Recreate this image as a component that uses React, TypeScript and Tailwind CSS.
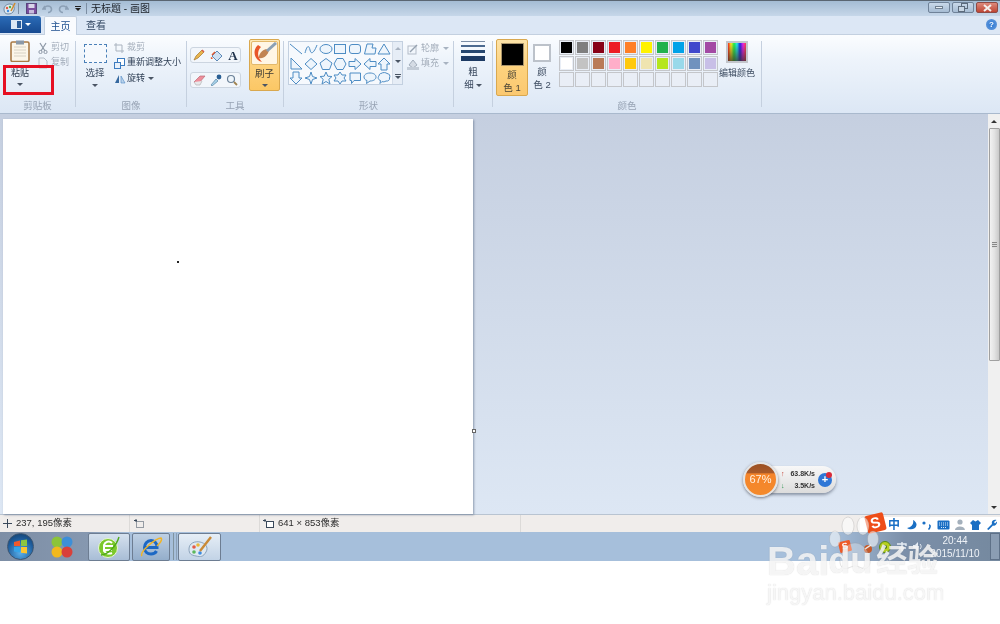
import React from "react";

const Caret = ({ className = "" }: { className?: string }) => (
  <span className={`inline-block w-0 h-0 border-x-[3px] border-t-[3px] border-x-transparent border-t-[#4a5564] ${className}`} />
);

const Div = () => <div className="w-px my-[6px] bg-[#c5d0df] shrink-0" />;

function Group({ w, label, children }: { w: string; label: string; children: React.ReactNode }) {
  return (
    <div className={`${w} shrink-0 flex flex-col`}>
      <div className="h-[65px] flex items-start">{children}</div>
      <div className="h-[12px] leading-[12px] text-center text-[9.5px] text-[#97a3b4]">{label}</div>
    </div>
  );
}

const I = ({ w = 12, h = 12, vb, children, className = "" }: { w?: number; h?: number; vb?: string; children: React.ReactNode; className?: string }) => (
  <svg width={w} height={h} viewBox={vb || `0 0 ${w} ${h}`} className={`shrink-0 ${className}`}>{children}</svg>
);

const shapes: React.ReactNode[] = [
  <path d="M1 2L13 12" />,
  <path d="M1 11C3 3 5 3 6 8S10 11 13 3" />,
  <ellipse cx="7" cy="7" rx="6" ry="4.5" />,
  <rect x="1.5" y="2.5" width="11" height="9" />,
  <rect x="1.5" y="2.5" width="11" height="9" rx="2.5" />,
  <path d="M1.5 12L4 2H10L9 6H13L12 12Z" />,
  <path d="M7 2L13 12H1Z" />,
  <path d="M2 1V12H13Z" />,
  <path d="M7 1.5L13 7L7 12.5L1 7Z" />,
  <path d="M7 1.5L13 6L10.5 12.5H3.5L1 6Z" />,
  <path d="M4 1.5H10L13 7L10 12.5H4L1 7Z" />,
  <path d="M1 4.5H7V1.5L13 7L7 12.5V9.5H1Z" />,
  <path d="M13 4.5H7V1.5L1 7L7 12.5V9.5H13Z" />,
  <path d="M7 1L13 7H10V13H4V7H1Z" />,
  <path d="M4 1H10V7H13L7 13L1 7H4Z" />,
  <path d="M7 1L8.5 5.5L13 7L8.5 8.5L7 13L5.5 8.5L1 7L5.5 5.5Z" />,
  <path d="M7 1L8.8 5.2L13 5.5L9.8 8.3L11 13L7 10.5L3 13L4.2 8.3L1 5.5L5.2 5.2Z" />,
  <path d="M7 1L9 4H13L11 7L13 10H9L7 13L5 10H1L3 7L1 4H5Z" />,
  <path d="M2 2H12.5V9.5H6L3.5 12.5V9.5H2Z" />,
  <path d="M7 2C11 2 13 4 13 6S11 10 7 10L3.5 12.5L4 9.5C2 9 1 7.5 1 6C1 4 3 2 7 2Z" />,
  <path d="M4 2.5C6 1 9 1.5 10 2.5C12.5 2.5 13.5 5 12.5 7C13 9 11 10.5 9 10C7.5 11 6 11 5 10.5L3 12.5L3.5 9.5C1 9 0.5 6 2 5C2 3.5 3 2.5 4 2.5Z" />,
];

const row1 = ["#000000", "#7f7f7f", "#880015", "#ed1c24", "#ff7f27", "#fff200", "#22b14c", "#00a2e8", "#3f48cc", "#a349a4"];
const row2 = ["#ffffff", "#c3c3c3", "#b97a57", "#ffaec9", "#ffc90e", "#efe4b0", "#b5e61d", "#99d9ea", "#7092be", "#c8bfe7"];

const Swatch = ({ c }: { c?: string }) => (
  <div className="w-[15px] h-[15px] border border-[#c4c6ca] p-px bg-[#e9eef6]">
    {c ? <div className="w-full h-full" style={{ backgroundColor: c }} /> : null}
  </div>
);

const WinBtn = ({ w = "w-[22px]", cls, children }: { w?: string; cls: string; children: React.ReactNode }) => (
  <div className={`${w} h-[11px] rounded-[2px] border border-[#6f8298] flex items-center justify-center ${cls}`}>{children}</div>
);

const TaskBtn = ({ w, cls, children }: { w: string; cls: string; children: React.ReactNode }) => (
  <div className={`${w} h-[28px] mt-px rounded-[2px] border border-[#6d7d92] flex items-center justify-center shrink-0 ${cls}`}>{children}</div>
);

export default function App() {
  return (
    <div className="relative w-[1000px] h-[624px] overflow-hidden bg-white flex flex-col blur-[0.35px] font-['Liberation_Sans','Noto_Sans_CJK_SC',sans-serif] text-[9px] text-[#3c4b60]">
      {/* title bar */}
      <div className="h-[16px] shrink-0 border-t border-[#5a6672] bg-[linear-gradient(180deg,#a4bcd4,#c6d7e9)] flex items-center pl-[3px] pr-[2px]">
        <I w={13} h={13} className="">
          <path d="M1 7C1 4 4 2 7 2S12 5 11 8 8 12 5 12 1 10 1 7Z" fill="#dfe8ef" stroke="#6f8aa5" />
          <circle cx="4" cy="6" r="1.2" fill="#e25b3f" />
          <circle cx="7" cy="5" r="1.2" fill="#4cae4c" />
          <circle cx="5" cy="9" r="1.2" fill="#3d8be0" />
          <path d="M8 9L12 1" stroke="#d08a2e" strokeWidth="1.5" />
        </I>
        <div className="w-px h-[11px] bg-[#7c8ea3] ml-[2px] mr-[7px]" />
        <I w={11} h={11}>
          <rect x="0.5" y="0.5" width="10" height="10" fill="#7a4d9e" stroke="#58457c" />
          <rect x="2.5" y="1" width="6" height="4" fill="#d9d5ea" />
          <rect x="3" y="7" width="5" height="3.5" fill="#c6bddd" />
        </I>
        <I w={11} h={11} className="ml-[5px]"><path d="M3 3L1 6H4M2 6C3 2 9 2 9.5 6C9.7 8 8 9.5 6 9.5" fill="none" stroke="#8ca0b6" strokeWidth="1.6" /></I>
        <I w={11} h={11} className="ml-[5px]"><path d="M8 3L10 6H7M9 6C8 2 2 2 1.5 6C1.3 8 3 9.5 5 9.5" fill="none" stroke="#8ca0b6" strokeWidth="1.6" /></I>
        <div className="ml-[6px] flex flex-col items-center gap-px">
          <div className="w-[6px] h-px bg-[#222]" />
          <Caret className="border-t-[#222]" />
        </div>
        <div className="w-px h-[11px] bg-[#7c8ea3] ml-[5px] mr-[3px]" />
        <span className="text-[10px] leading-none text-[#20262e] ml-px">无标题 - 画图</span>
        <div className="flex-1" />
        <div className="flex gap-[2px] mt-[-2px]">
          <WinBtn cls="bg-[linear-gradient(180deg,#c9d9ea,#a6bcd3)]"><div className="w-[8px] h-[3px] bg-[#e9eff5] border border-[#6f7f90]" /></WinBtn>
          <WinBtn cls="bg-[linear-gradient(180deg,#c9d9ea,#a6bcd3)]">
            <I w={10} h={9}><rect x="3.5" y="0.5" width="6" height="5" fill="none" stroke="#5c6b7c" /><rect x="0.5" y="3.5" width="6" height="5" fill="#c8d6e4" stroke="#5c6b7c" /></I>
          </WinBtn>
          <WinBtn cls="bg-[linear-gradient(180deg,#dd8a7c,#bf4534)] border-[#8e4a45]">
            <I w={9} h={8}><path d="M1 1L8 7M8 1L1 7" stroke="#f4f0ee" strokeWidth="2" /></I>
          </WinBtn>
        </div>
      </div>

      {/* tabs */}
      <div className="h-[19px] shrink-0 bg-[#dce7f5] flex items-end border-b border-[#c3d0e0] pr-[2px]">
        <div className="w-[41px] h-[17px] mb-px rounded-tr-[3px] bg-[linear-gradient(180deg,#2b6cb8,#174a90)] flex items-center justify-center gap-[3px]">
          <I w={11} h={9}><rect x="0" y="0" width="11" height="9" fill="#dce8f5" /><rect x="6" y="1" width="4" height="7" fill="#2b5c99" /></I>
          <Caret className="border-t-white" />
        </div>
        <div className="ml-[3px] w-[33px] h-[19px] -mb-px bg-[#f9fbfe] border border-b-0 border-[#c3d0e0] rounded-t-[2px] flex items-center justify-center text-[10px] text-[#1d4f8f]">主页</div>
        <div className="w-[42px] h-[18px] flex items-center justify-center text-[10px] text-[#2f4560] ml-[-4px] pl-[4px]">查看</div>
        <div className="flex-1" />
        <div className="w-[11px] h-[11px] mb-[4px] mr-px rounded-full bg-[radial-gradient(circle,#2a78d4,#6d9ddb)] flex items-center justify-center text-[8px] font-bold text-white leading-none">?</div>
      </div>

      {/* ribbon */}
      <div className="h-[79px] shrink-0 flex bg-[linear-gradient(180deg,#fbfdff,#eef4fb_30%,#dce7f5)] border-b border-[#a9b9cd]">
        <Group w="w-[75px]" label="剪贴板">
          <div className="flex pl-[10px] pt-[5px]">
            <div className="w-[20px] flex flex-col items-center">
              <I w={20} h={22}>
                <rect x="1" y="2" width="18" height="19.5" rx="1.5" fill="#fbf6e9" stroke="#a97b45" strokeWidth="1.6" />
                <rect x="6" y="0.5" width="8" height="4" fill="#8a99a8" />
                <path d="M4 7H16M4 10H16M4 13H16M4 16H16" stroke="#d7d2c4" />
              </I>
              <span className="leading-[12px] mt-[5px] text-[#2f3c4e]">粘贴</span>
              <Caret className="mt-[4px]" />
            </div>
            <div className="ml-[8px] flex flex-col text-[#a3adba]">
              <div className="h-[15px] flex items-center gap-[3px]">
                <I w={10} h={12}><path d="M2 1L7 9M8 1L3 9" stroke="#8d98a6" strokeWidth="1.2" /><circle cx="2.5" cy="10" r="1.6" fill="none" stroke="#8d98a6" /><circle cx="7.5" cy="10" r="1.6" fill="none" stroke="#8d98a6" /></I>
                <span>剪切</span>
              </div>
              <div className="h-[15px] flex items-center gap-[3px]">
                <I w={10} h={12}><path d="M1 1H6L9 4V11H1Z" fill="#eef2f7" stroke="#b4bdc8" /></I>
                <span>复制</span>
              </div>
            </div>
          </div>
        </Group>
        <Div />
        <Group w="w-[110px]" label="图像">
          <div className="flex pl-[7px] pt-[9px]">
            <div className="w-[24px] flex flex-col items-center">
              <div className="w-[23px] h-[19px] border border-dashed border-[#4a80b8] bg-[#f6f9fd]" />
              <span className="leading-[12px] mt-[4px] text-[9.5px]">选择</span>
              <Caret className="mt-[5px]" />
            </div>
            <div className="ml-[7px] -mt-[4px] flex flex-col">
              <div className="h-[15px] flex items-center gap-[3px] text-[#a3adba]">
                <I w={10} h={10}><path d="M2 0V8H10M0 2H8V10" fill="none" stroke="#a9b3bf" /></I>
                <span>裁剪</span>
              </div>
              <div className="h-[16px] flex items-center gap-[2px] text-[#2f3f55]">
                <I w={11} h={11}><rect x="3.5" y="0.5" width="7" height="7" fill="#fff" stroke="#3d7cc0" /><rect x="0.5" y="4.5" width="6" height="6" fill="#e9f1fa" stroke="#3d7cc0" /></I>
                <span>重新调整大小</span>
              </div>
              <div className="h-[15px] flex items-center gap-[1px] text-[#2f3f55]">
                <I w={12} h={10}><path d="M1 9L5 1V9Z" fill="#35689f" /><path d="M7 9V2L11 9Z" fill="#b9d3ec" stroke="#4d87c2" strokeWidth=".6" /></I>
                <span>旋转</span>
                <Caret className="ml-[2px]" />
              </div>
            </div>
          </div>
        </Group>
        <Div />
        <Group w="w-[96px]" label="工具">
          <div className="flex pl-[3px] pt-[4px]">
            <div className="mt-[8px] flex flex-col gap-[9px]">
              <div className="w-[51px] h-[16px] rounded-[3px] border border-[#ccd5e0] bg-[#f2f6fb] flex items-center justify-around">
                <I w={12} h={12}><path d="M1 11L3 7L9 1L11 3L5 9Z" fill="#e9b64e" stroke="#a4742c" strokeWidth=".7" /><path d="M9 1L11 3" stroke="#d65a4a" strokeWidth="1.4" /></I>
                <I w={13} h={13}><path d="M2 7L7 2L12 7L7 12Z" fill="#cfe1f3" stroke="#5e89b6" /><path d="M1 8C0 10 2 11 3 9Z" fill="#e4572e" /><path d="M2 6L5 3" stroke="#e4572e" strokeWidth="1.5" /></I>
                <span className="font-['Liberation_Serif',serif] font-bold text-[13px] leading-none text-[#22344d]">A</span>
              </div>
              <div className="w-[51px] h-[16px] rounded-[3px] border border-[#ccd5e0] bg-[#f2f6fb] flex items-center justify-around">
                <I w={13} h={11}><path d="M1 7L7 1H12L6 8H3Z" fill="#ee8e9a" stroke="#ba6c78" strokeWidth=".7" /><path d="M1 7L3 10H7L9 6" fill="#e8e8ea" stroke="#aaa" strokeWidth=".6" /></I>
                <I w={12} h={12}><path d="M1 11L6 5L8 7L2 12Z" fill="#a8d3ea" stroke="#5a86a8" strokeWidth=".7" /><circle cx="9" cy="3" r="2.4" fill="#2a5f94" /></I>
                <I w={12} h={12}><circle cx="5" cy="5" r="3.5" fill="#eef5fb" stroke="#6a8098" strokeWidth="1.2" /><path d="M8 8L11 11" stroke="#a08350" strokeWidth="1.8" /></I>
              </div>
            </div>
            <div className="ml-[8px] w-[31px] h-[52px] rounded-[2px] border border-[#d9a84f] bg-[linear-gradient(180deg,#fde9b9,#fdd27d_50%,#fbc765)] flex flex-col items-center">
              <div className="w-[27px] h-[24px] mt-px bg-[#fff6e5] rounded-[2px] border border-[#e2b86a] flex items-center justify-center">
                <I w={25} h={22}>
                  <path d="M6 3C0 8 2 18 10 20C5 15 5 9 9 5Z" fill="#e8562a" />
                  <path d="M7 14C9 8 14 6 17 8C16 13 12 17 7 16Z" fill="#c18452" />
                  <path d="M15 9L24 1" stroke="#8ba0b4" strokeWidth="3" />
                </I>
              </div>
              <span className="leading-[12px] mt-[3px] text-[9.5px] text-[#3d3a33]">刷子</span>
              <Caret className="mt-[4px]" />
            </div>
          </div>
        </Group>
        <Div />
        <Group w="w-[169px]" label="形状">
          <div className="flex pl-[4px] pt-[6px]">
            <div className="w-[115px] h-[44px] border border-[#c3d0e0] bg-[#f6f9fd] flex">
              <div className="grid grid-cols-[repeat(7,14.7px)] grid-rows-[repeat(3,14.4px)] flex-1">
                {shapes.map((s, i) => (
                  <div key={i} className="flex items-center justify-center">
                    <svg width="14" height="14" viewBox="0 0 14 14" fill="#eef5fc" stroke="#4d8cc4" strokeWidth="1">{s}</svg>
                  </div>
                ))}
              </div>
              <div className="w-[10px] shrink-0 border-l border-[#d3dce8] bg-[#e6edf6] flex flex-col items-center justify-around">
                <Caret className="rotate-180 border-t-[#a8b3c1]" />
                <Caret />
                <div className="flex flex-col items-center gap-px"><div className="w-[6px] h-px bg-[#4a5564]" /><Caret /></div>
              </div>
            </div>
            <div className="ml-[4px] flex flex-col text-[#a3adba]">
              <div className="h-[15px] flex items-center gap-[2px]">
                <I w={12} h={12}><rect x="1" y="3" width="8" height="8" fill="none" stroke="#b3bcc8" /><path d="M3 9L10 2" stroke="#97a3b1" strokeWidth="1.5" /></I>
                <span>轮廓</span>
                <Caret className="ml-[2px] border-t-[#a8b3c1]" />
              </div>
              <div className="h-[15px] flex items-center gap-[2px]">
                <I w={12} h={12}><path d="M2 7L6 2L10 7L6 10Z" fill="#d5dce5" stroke="#a3aebc" /><rect x="0" y="9" width="12" height="3" fill="#c3ccd7" /></I>
                <span>填充</span>
                <Caret className="ml-[2px] border-t-[#a8b3c1]" />
              </div>
            </div>
          </div>
        </Group>
        <Div />
        <Group w="w-[38px]" label="">
          <div className="flex flex-col items-center w-full pt-[6px]">
            <div className="w-[24px] flex flex-col items-stretch">
              <div className="h-px bg-[#7c8ea6]" />
              <div className="h-[2px] mt-[3px] bg-[#4c6a90]" />
              <div className="h-[3px] mt-[3px] bg-[#27476f]" />
              <div className="h-[5px] mt-[3px] bg-[#1d3a63]" />
            </div>
            <span className="leading-[12px] mt-[5px] text-[9.5px]">粗</span>
            <div className="leading-[12px] mt-px text-[9.5px] flex items-center gap-[2px]">细<Caret /></div>
          </div>
        </Group>
        <Div />
        <Group w="w-[268px]" label="颜色">
          <div className="flex pl-[3px] pt-[4px]">
            <div className="w-[32px] h-[57px] rounded-[2px] border border-[#d9a84f] bg-[linear-gradient(180deg,#fde3a8,#fdd27d_50%,#fbc870)] flex flex-col items-center pt-[3px]">
              <div className="w-[23px] h-[23px] bg-black border border-[#a9946c]" />
              <span className="leading-[12px] mt-[3px] text-[9.5px] text-[#4a4436]">颜</span>
              <span className="leading-[12px] mt-px text-[9.5px] text-[#4a4436]">色 1</span>
            </div>
            <div className="w-[24px] ml-[2px] flex flex-col items-center pt-[5px]">
              <div className="w-[18px] h-[18px] bg-white border-2 border-[#bcc2ca]" />
              <span className="leading-[12px] mt-[4px] text-[9.5px]">颜</span>
              <span className="leading-[12px] mt-px text-[9.5px]">色 2</span>
            </div>
            <div className="ml-[5px] mt-px grid grid-cols-[repeat(10,15px)] gap-px self-start">
              {row1.map((c) => <Swatch key={c} c={c} />)}
              {row2.map((c) => <Swatch key={c} c={c} />)}
              {Array.from({ length: 10 }).map((_, i) => <Swatch key={i} />)}
            </div>
            <div className="ml-px w-[36px] flex flex-col items-center pt-[2px]">
              <div className="w-[22px] h-[22px] border-2 border-[#c3c6cc] bg-[linear-gradient(180deg,transparent,rgba(60,50,40,.75)),linear-gradient(90deg,#f22,#fe2,#2e4,#2ee,#22e,#e2e,#f44)]" />
              <span className="leading-[12px] mt-[4px] text-[9px] whitespace-nowrap">编辑颜色</span>
            </div>
          </div>
        </Group>
        <Div />
      </div>

      {/* work area */}
      <div className="h-[400px] shrink-0 flex bg-[linear-gradient(180deg,#c5cfe0,#dde7f4)]">
        <div className="flex-1 pl-[3px] pt-[5px] flex">
          <div className="relative w-[470px] bg-white shadow-[1px_1px_2px_rgba(90,105,130,.6)]">
            <div className="absolute left-[174px] top-[142px] w-[2px] h-[2px] bg-[#222]" />
            <div className="absolute right-[-3px] top-[310px] w-[4px] h-[4px] bg-white border border-[#666]" />
          </div>
        </div>
        <div className="w-[12px] shrink-0 bg-[#f0f0f0] flex flex-col items-center">
          <div className="h-[14px] flex items-center justify-center"><Caret className="rotate-180 border-t-[#333]" /></div>
          <div className="w-[11px] h-[233px] rounded-[1px] border border-[#a0a0a0] bg-[linear-gradient(90deg,#f2f2f2,#e2e2e2_50%,#c9c9c9)] flex items-center justify-center">
            <div className="w-[5px] h-[6px] bg-[repeating-linear-gradient(180deg,#888_0,#888_1px,#ddd_1px,#ddd_2px)]" />
          </div>
          <div className="flex-1" />
          <div className="h-[14px] flex items-center justify-center"><Caret className="border-t-[#333]" /></div>
        </div>
      </div>

      {/* status bar */}
      <div className="h-[18px] shrink-0 bg-[#f0edeb] border-t border-[#b9c4d1] flex items-center text-[9.5px] text-[#2d2d2d]">
        <div className="w-[130px] h-full border-r border-[#dcdad8] flex items-center pl-[3px] gap-[4px]">
          <I w={9} h={9}><path d="M4.5 0V9M0 4.5H9" stroke="#39485a" /></I>
          <span>237, 195像素</span>
        </div>
        <div className="w-[130px] h-full border-r border-[#dcdad8] flex items-center pl-[4px]">
          <I w={10} h={10}><path d="M2 0V3M0 1.5H3" stroke="#39485a" /><rect x="2.5" y="2.5" width="7" height="6" fill="none" stroke="#39485a" strokeDasharray="1 1" /></I>
        </div>
        <div className="w-[261px] h-full border-r border-[#dcdad8] flex items-center pl-[3px] gap-[4px]">
          <I w={11} h={10}><path d="M2 0V3M0 1.5H3" stroke="#39485a" /><rect x="3.5" y="2.5" width="7" height="6" fill="#fff" stroke="#39485a" /></I>
          <span>641 × 853像素</span>
        </div>
      </div>

      {/* taskbar */}
      <div className="h-[29px] shrink-0 flex bg-[linear-gradient(90deg,#7d8ea5_0,#8698b0_88px,#a6bfdb_130px,#a6bfdb_830px,#7b8fa9_905px,#75899f_1000px)]">
        <div className="w-[40px] flex items-center justify-center shrink-0">
          <div className="w-[27px] h-[27px] rounded-full bg-[radial-gradient(circle_at_50%_75%,#5bb0ea,#1d5c9c_60%,#123a60)] border border-[#3b5470] flex items-center justify-center">
            <I w={15} h={15}>
              <path d="M1 3L7 1.5V7H1Z" fill="#f0592b" /><path d="M8 1.3L14 0.5V7H8Z" fill="#8cc63f" />
              <path d="M1 8H7V13.5L1 12.5Z" fill="#35a4e8" /><path d="M8 8H14V14.5L8 13.7Z" fill="#fdc52f" />
            </I>
          </div>
        </div>
        <div className="w-[44px] flex items-center justify-center shrink-0">
          <I w={24} h={24}>
            <circle cx="7" cy="7" r="5.5" fill="#8cc43a" /><circle cx="17" cy="7" r="5.5" fill="#3d8fd8" />
            <circle cx="7" cy="17" r="5.5" fill="#f2b81e" /><circle cx="17" cy="17" r="5.5" fill="#d9403a" />
          </I>
        </div>
        <TaskBtn w="w-[42px] ml-[4px]" cls="bg-[linear-gradient(180deg,#d5e1ee,#a8bdd6)]">
          <I w={24} h={24}>
            <circle cx="11" cy="13" r="9.5" fill="#7cc92c" stroke="#e8f6d2" />
            <path d="M6 11H16M6 15H15M15 8C12 5 8 7 7 10V16C9 19 13 19 15 18" fill="none" stroke="#fff" strokeWidth="2" />
            <path d="M4 20C10 20 19 12 22 2" fill="none" stroke="#4fa81a" strokeWidth="1.4" />
          </I>
        </TaskBtn>
        <TaskBtn w="w-[38px] ml-[2px]" cls="bg-[linear-gradient(180deg,#bed0e4,#94aecb)]">
          <I w={24} h={24}>
            <path d="M6.5 12.5H18C18 7 14.5 5.5 12 5.5C8 5.5 5.5 9 5.5 12.5C5.5 17 8.5 19 12 19C14.5 19 16.5 18 17.5 16" fill="none" stroke="#1c68c4" strokeWidth="3" />
            <path d="M3 21C0 17 17 3 22 3C24 5 20 9 18 11" fill="none" stroke="#f0b428" strokeWidth="1.5" />
          </I>
        </TaskBtn>
        <div className="w-px mt-px h-[27px] ml-[3px] bg-[#80939f]" />
        <div className="w-px mt-px h-[27px] ml-[2px] bg-[#8ba0b6]" />
        <TaskBtn w="w-[43px] ml-px" cls="bg-[linear-gradient(180deg,#e6eef6,#c2d3e6)]">
          <I w={26} h={24}>
            <path d="M2 14C2 8 8 6 13 7S22 12 19 17 14 22 9 21 2 19 2 14Z" fill="#dfe9f2" stroke="#8aa2ba" />
            <circle cx="7" cy="12" r="1.8" fill="#e35a47" /><circle cx="11" cy="10" r="1.8" fill="#eab73a" /><circle cx="7" cy="17" r="1.8" fill="#5cb85c" /><circle cx="13" cy="18" r="1.8" fill="#3d8be0" />
            <path d="M13 16L24 2" stroke="#c98a37" strokeWidth="2.4" />
          </I>
        </TaskBtn>
        <div className="flex-1" />
        <div className="flex items-center pr-[15px]">
          <div className="w-[12px] h-[11px] rotate-[-14deg] rounded-[1px] bg-[#ee5a28] text-white text-[9px] font-bold leading-[11px] text-center">S</div>
          <I w={12} h={12} className="ml-[11px]"><circle cx="6" cy="8" r="4" fill="#c65a2a" /><path d="M3 8L9 4" stroke="#eee" strokeWidth="1.5" /></I>
          <I w={12} h={12} className="ml-[5px]"><circle cx="6" cy="6" r="5.5" fill="#b6d020" stroke="#5b8a12" /><circle cx="6" cy="6" r="2" fill="#48701a" /></I>
          <I w={12} h={11} className="ml-[5px]"><path d="M1 3H10V5M3 7H10M6 1V10" stroke="#e6edf5" strokeWidth="1.4" fill="none" /></I>
          <I w={12} h={11} className="ml-[4px]"><path d="M1 4H3L6 1V10L3 7H1Z" fill="#e6edf5" /><path d="M8 3C9.5 4.5 9.5 6.5 8 8" stroke="#e6edf5" fill="none" /></I>
          <div className="flex flex-col items-center text-[10px] leading-[13px] text-[#eef2f7] w-[60px] ml-px whitespace-nowrap">
            <span>20:44</span>
            <span>2015/11/10</span>
          </div>
        </div>
        <div className="absolute right-0 top-[533px] w-[10px] h-[27px] border border-[#5f7188] bg-[#8b9db3]" />
      </div>

      {/* red highlight */}
      <div className="absolute left-[3px] top-[65px] w-[51px] h-[30px] border-[3px] border-[#e60f22]" />

      {/* floating net speed widget */}
      <div className="absolute left-[760px] top-[466px] w-[76px] h-[27px] rounded-full bg-[linear-gradient(180deg,#f8f8f8,#dcdcdc)] shadow-[0_2px_3px_rgba(60,70,90,.5)] flex items-center pl-[21px] text-[7px] font-bold text-[#333]">
        <div className="flex flex-col leading-[12px]">
          <div className="flex items-center justify-between w-[34px]"><span className="text-[#c0392b]">↑</span><span>63.8K/s</span></div>
          <div className="flex items-center justify-between w-[34px]"><span className="text-[#27924a]">↓</span><span>3.5K/s</span></div>
        </div>
      </div>
      <div className="absolute left-[818px] top-[473px] w-[14px] h-[14px] rounded-full bg-[#2f77d6] text-white text-[11px] font-bold leading-[13px] text-center">+</div>
      <div className="absolute left-[826px] top-[472px] w-[6px] h-[6px] rounded-full bg-[#d92b3a]" />
      <div className="absolute left-[743px] top-[462px] w-[35px] h-[35px] rounded-full border-2 border-[#e4e4e4] shadow-[0_1px_3px_rgba(50,50,60,.6)] bg-[linear-gradient(180deg,#9b5022_0,#a95a2a_30%,#f5842a_31%,#f48a2c_100%)] flex items-center justify-center text-[11px] text-[#fff3e6]">67%</div>

      {/* IME bar */}
      <div className="absolute left-[860px] top-[517px] w-[140px] h-[15px] bg-white flex items-center text-[#1a6fc4]">
        <span className="absolute left-[28px] text-[12px] font-bold leading-none">中</span>
        <I w={11} h={11} className="absolute left-[46px]"><path d="M7 1C8 5 6 8 1 9C4 11.5 10 10.5 10.5 6C10.8 4 9 2 7 1Z" fill="#1a6fc4" /></I>
        <I w={10} h={10} className="absolute left-[62px]"><circle cx="2" cy="3" r="1.6" fill="#1a6fc4" /><path d="M7 5C8.5 5 8.5 7.5 6.5 9.5" stroke="#1a6fc4" strokeWidth="1.6" fill="none" /></I>
        <I w={13} h={10} className="absolute left-[77px]"><rect x="0.5" y="0.5" width="12" height="9" rx="1" fill="#1a6fc4" /><path d="M2 3H11M2 5H11M4 7.5H9" stroke="#d9ebfb" strokeDasharray="1 1" /></I>
        <I w={11} h={12} className="absolute left-[95px]"><circle cx="5" cy="3" r="2.6" fill="#a4b0bc" /><path d="M0 11C0 7 9 6 10 11Z" fill="#a4b0bc" /></I>
        <I w={11} h={10} className="absolute left-[110px]"><path d="M3 0L5.5 1.5L8 0L11 3L9 5V10H2V5L0 3Z" fill="#1a6fc4" /></I>
        <I w={11} h={11} className="absolute left-[126px]"><path d="M1 10L6 5C5 2 8 0 10.5 1L8 3L9 4.5L11 2.5C11.5 5 9 7.5 7 6.5L2.5 11Z" fill="#1a6fc4" /></I>
      </div>
      <div className="absolute left-[866px] top-[514px] w-[19px] h-[18px] rotate-[-14deg] rounded-[2px] bg-[#ee4d18] text-white text-[15px] font-bold leading-[18px] text-center">S</div>

      {/* watermark */}
      <div className="absolute left-[767px] top-[510px] w-[182px] h-[94px] pointer-events-none">
        <I w={56} h={66} className="absolute left-[60px] top-0">
          <g fill="#ffffff" fillOpacity=".55" stroke="#8d8d8d" strokeOpacity=".25">
            <ellipse cx="21" cy="16" rx="6" ry="9" /><ellipse cx="36" cy="16" rx="6" ry="9" />
            <ellipse cx="8" cy="29" rx="5.5" ry="8" /><ellipse cx="46" cy="29" rx="5.5" ry="8" />
            <path d="M28 33C38 33 46 47 42 56C38 62 33 56 28 56C23 56 18 62 14 56C10 47 18 33 28 33Z" fillOpacity=".3" />
          </g>
        </I>
        <div className="absolute left-0 top-[31px] flex items-start whitespace-nowrap text-white/80 [text-shadow:0_0_1px_rgba(90,90,90,.3)]">
          <span className="font-bold text-[40px] leading-[40px]">Bai</span>
          <span className="font-bold text-[36px] leading-[40px] ml-[-1px]">du</span>
          <span className="text-[31px] leading-[40px] font-bold ml-[4px]">经验</span>
        </div>
        <div className="absolute left-0 top-[71px] text-[22px] leading-[24px] text-white/80 [text-shadow:0_0_1px_rgba(90,90,90,.3)] whitespace-nowrap">jingyan.baidu.com</div>
      </div>
    </div>
  );
}
